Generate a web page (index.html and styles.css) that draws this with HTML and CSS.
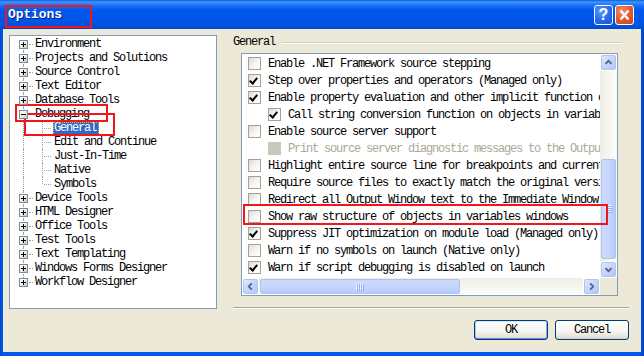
FILE: index.html
```html
<!DOCTYPE html>
<html>
<head>
<meta charset="utf-8">
<link rel="stylesheet" href="styles.css">
</head>
<body>
<div class="window">
  <div class="titlebar">
    <span class="title">Options</span>
    <div class="caption-btns">
      <span class="cbtn help">?</span>
      <span class="cbtn close"><svg width="19" height="20" viewBox="0 0 19 20"><path d="M5.5 5.5 L13.5 14.5 M13.5 5.5 L5.5 14.5" stroke="#fff" stroke-width="2.2" fill="none"/></svg></span>
    </div>
  </div>
  <div class="client">
    <div class="main">
      <div class="tree">
        <ul class="tree-list">
          <li class="node root first"><span class="twig"><i class="pm plus"></i></span><span class="lbl">Environment</span></li>
          <li class="node root"><span class="twig"><i class="pm plus"></i></span><span class="lbl">Projects and Solutions</span></li>
          <li class="node root"><span class="twig"><i class="pm plus"></i></span><span class="lbl">Source Control</span></li>
          <li class="node root"><span class="twig"><i class="pm plus"></i></span><span class="lbl">Text Editor</span></li>
          <li class="node root"><span class="twig"><i class="pm plus"></i></span><span class="lbl">Database Tools</span></li>
          <li class="node root"><span class="twig"><i class="pm minus"></i></span><span class="lbl">Debugging</span></li>
          <li class="node child"><span class="twig pass"></span><span class="twig"></span><span class="lbl sel">General</span></li>
          <li class="node child"><span class="twig pass"></span><span class="twig"></span><span class="lbl">Edit and Continue</span></li>
          <li class="node child"><span class="twig pass"></span><span class="twig"></span><span class="lbl">Just-In-Time</span></li>
          <li class="node child"><span class="twig pass"></span><span class="twig"></span><span class="lbl">Native</span></li>
          <li class="node child lastchild"><span class="twig pass"></span><span class="twig"></span><span class="lbl">Symbols</span></li>
          <li class="node root"><span class="twig"><i class="pm plus"></i></span><span class="lbl">Device Tools</span></li>
          <li class="node root"><span class="twig"><i class="pm plus"></i></span><span class="lbl">HTML Designer</span></li>
          <li class="node root"><span class="twig"><i class="pm plus"></i></span><span class="lbl">Office Tools</span></li>
          <li class="node root"><span class="twig"><i class="pm plus"></i></span><span class="lbl">Test Tools</span></li>
          <li class="node root"><span class="twig"><i class="pm plus"></i></span><span class="lbl">Text Templating</span></li>
          <li class="node root"><span class="twig"><i class="pm plus"></i></span><span class="lbl">Windows Forms Designer</span></li>
          <li class="node root last"><span class="twig"><i class="pm plus"></i></span><span class="lbl">Workflow Designer</span></li>
        </ul>
      </div>
      <div class="page">
        <div class="group-head"><span class="group-title">General</span><span class="rule"></span></div>
        <div class="listbox">
          <div class="list-area">
            <ul class="list">
              <li class="opt"><span class="cb"></span><span class="otext">Enable .NET Framework source stepping</span></li>
              <li class="opt"><span class="cb on"></span><span class="otext">Step over properties and operators (Managed only)</span></li>
              <li class="opt"><span class="cb on"></span><span class="otext">Enable property evaluation and other implicit function calls</span></li>
              <li class="opt sub"><span class="cb on"></span><span class="otext">Call string conversion function on objects in variables windows</span></li>
              <li class="opt"><span class="cb"></span><span class="otext">Enable source server support</span></li>
              <li class="opt sub off"><span class="cb"></span><span class="otext">Print source server diagnostic messages to the Output window</span></li>
              <li class="opt"><span class="cb"></span><span class="otext">Highlight entire source line for breakpoints and current statement</span></li>
              <li class="opt"><span class="cb"></span><span class="otext">Require source files to exactly match the original version</span></li>
              <li class="opt"><span class="cb"></span><span class="otext">Redirect all Output Window text to the Immediate Window</span></li>
              <li class="opt"><span class="cb"></span><span class="otext">Show raw structure of objects in variables windows</span></li>
              <li class="opt"><span class="cb on"></span><span class="otext">Suppress JIT optimization on module load (Managed only)</span></li>
              <li class="opt"><span class="cb"></span><span class="otext">Warn if no symbols on launch (Native only)</span></li>
              <li class="opt"><span class="cb on"></span><span class="otext">Warn if script debugging is disabled on launch</span></li>
            </ul>
            <div class="vscroll">
              <span class="sbtn"><svg width="15" height="15" viewBox="0 0 15 15"><path d="M4 9 L7.5 5.5 L11 9" stroke="#4D6185" stroke-width="2" fill="none"/></svg></span>
              <div class="vtrack">
                <span class="vthumb"><svg width="8" height="8" viewBox="0 0 8 8"><path d="M0 0.5H7M0 2.5H7M0 4.5H7M0 6.5H7" stroke="#EEF4FE"/><path d="M1 1.5H8M1 3.5H8M1 5.5H8M1 7.5H8" stroke="#8CB0F8"/></svg></span>
              </div>
              <span class="sbtn"><svg width="15" height="15" viewBox="0 0 15 15"><path d="M4 6 L7.5 9.5 L11 6" stroke="#4D6185" stroke-width="2" fill="none"/></svg></span>
            </div>
          </div>
          <div class="hscroll">
            <span class="sbtn"><svg width="15" height="15" viewBox="0 0 15 15"><path d="M9 4 L5.5 7.5 L9 11" stroke="#4D6185" stroke-width="2" fill="none"/></svg></span>
            <div class="htrack">
              <span class="hthumb"><svg width="8" height="8" viewBox="0 0 8 8"><path d="M0.5 0V7M2.5 0V7M4.5 0V7M6.5 0V7" stroke="#EEF4FE"/><path d="M1.5 1V8M3.5 1V8M5.5 1V8M7.5 1V8" stroke="#8CB0F8"/></svg></span>
            </div>
            <span class="sbtn"><svg width="15" height="15" viewBox="0 0 15 15"><path d="M6 4 L9.5 7.5 L6 11" stroke="#4D6185" stroke-width="2" fill="none"/></svg></span>
            <span class="corner"></span>
          </div>
        </div>
        <div class="sep"></div>
      </div>
    </div>
    <div class="buttons">
      <button class="btn default">OK</button>
      <button class="btn">Cancel</button>
    </div>
  </div>
  <span class="mark mark-title"></span>
  <span class="mark mark-debug"></span>
  <span class="mark mark-general"></span>
  <span class="mark mark-show"></span>
</div>
</body>
</html>
```

FILE: styles.css
```css
* { box-sizing: border-box; }
html, body { margin: 0; padding: 0; background: #fff; }
body { font-family: "Liberation Mono", "DejaVu Sans Mono", monospace; font-size: 12px; letter-spacing: -1.2px; color: #000; }

.window {
  position: relative;
  width: 644px;
  height: 356px;
  display: flex;
  flex-direction: column;
  background: linear-gradient(to right, #0047D6 0, #0058EE 3px, #0058EE 640px, #0040C0 644px);
  overflow: hidden;
}

.titlebar {
  height: 29px;
  flex: none;
  display: flex;
  align-items: center;
  justify-content: space-between;
  padding: 0 10px 0 8px;
  background: linear-gradient(#0A5FE0 0, #3D95FF 2px, #1E74F6 5px, #0058EE 10px, #0055E5 22px, #0050DC 27px, #0046C8 29px);
}
.title {
  color: #fff;
  font-weight: bold;
  font-size: 13px;
  letter-spacing: -0.1px;
  text-shadow: 1px 1px 0 #0A1883;
}
.caption-btns { display: flex; gap: 2px; }
.cbtn {
  width: 19px;
  height: 20px;
  border: 1px solid #fff;
  border-radius: 3px;
  display: flex;
  align-items: center;
  justify-content: center;
  color: #fff;
}
.cbtn svg { margin: -1px; }
.help {
  background: radial-gradient(circle at 35% 30%, #5A9BFF 0, #2767F0 55%, #1A55D8 100%);
  font-family: "Liberation Sans", Arial, sans-serif;
  font-weight: bold;
  font-size: 16px;
  letter-spacing: 0;
}
.close {
  background: radial-gradient(circle at 35% 30%, #F09070 0, #E0582C 55%, #C8401A 100%);
}

.client {
  flex: 1;
  margin: 0 3px 4px 3px;
  background: #ECE9D8;
  display: flex;
  flex-direction: column;
}
.main {
  display: flex;
  padding: 6px 0 0 6px;
}

/* tree */
.tree {
  width: 208px;
  height: 274px;
  border: 1px solid #7F9DB9;
  background: #fff;
  flex: none;
}
.tree-list {
  list-style: none;
  margin: 0;
  padding: 1px 0 0 4px;
}
.node {
  height: 14px;
  display: flex;
  align-items: center;
}
.twig {
  position: relative;
  width: 18px;
  height: 14px;
  flex: none;
}
.child .twig.pass { width: 19px; }
.twig::before {
  content: "";
  position: absolute;
  left: 9px;
  top: 0;
  bottom: 0;
  border-left: 1px dotted #A0A0A0;
}
.twig::after {
  content: "";
  position: absolute;
  left: 11px;
  width: 7px;
  top: 7px;
  border-top: 1px dotted #A0A0A0;
}
.root .twig::after { left: 15px; width: 4px; }
.twig.pass::after { display: none; }
.root.first .twig::before { top: 7px; }
.root.last .twig::before { bottom: 7px; }
.lastchild .twig:not(.pass)::before { bottom: 7px; }
.pm {
  position: absolute;
  left: 5px;
  top: 3px;
  width: 9px;
  height: 9px;
  border: 1px solid #7A8B9C;
  background: linear-gradient(135deg, #fff 0, #F3F1EA 45%, #C8C3B2 100%);
  z-index: 1;
}
.pm::before {
  content: "";
  position: absolute;
  left: 1px;
  top: 3px;
  width: 5px;
  height: 1px;
  background: #000;
}
.plus::after {
  content: "";
  position: absolute;
  left: 3px;
  top: 1px;
  width: 1px;
  height: 5px;
  background: #000;
}
.lbl {
  margin-left: 2px;
  padding: 0 3px 0 1px;
  height: 13px;
  line-height: 13px;
  white-space: nowrap;
}
.lbl.sel {
  background: #316AC5;
  color: #fff;
  outline: 1px dotted #E8B838;
  outline-offset: -1px;
}

/* page */
.page {
  margin-left: 16px;
  width: 396px;
  display: flex;
  flex-direction: column;
}
.group-head {
  margin-top: 1px;
  height: 12px;
  display: flex;
  align-items: center;
}
.group-title { line-height: 12px; }
.rule {
  flex: 1;
  height: 2px;
  margin: 1px 7px 0 7px;
  border-top: 1px solid #D0D0BF;
  border-bottom: 1px solid #fff;
}
.listbox {
  margin: 5px 0 0 8px;
  width: 377px;
  height: 243px;
  border: 1px solid #7F9DB9;
  background: #fff;
  display: flex;
  flex-direction: column;
}
.list-area {
  display: flex;
  height: 224px;
}
.list {
  list-style: none;
  margin: 0;
  padding: 1px 0 0 0;
  flex: 1;
  overflow: hidden;
}
.opt {
  height: 17px;
  display: flex;
  align-items: center;
  padding-left: 6px;
  white-space: nowrap;
}
.opt.sub { padding-left: 26px; }
.cb {
  width: 13px;
  height: 13px;
  flex: none;
  margin-right: 7px;
  border: 1px solid #A3A29A;
  background: linear-gradient(135deg, #DCDCD6 0, #F4F4F0 50%, #fff 100%);
  position: relative;
}
.cb.on::after {
  content: "";
  position: absolute;
  left: 2px;
  top: 1px;
  width: 3px;
  height: 6px;
  border-right: 2px solid #000;
  border-bottom: 2px solid #000;
  transform: rotate(40deg);
  transform-origin: center;
}
.off .cb { background: #CAC8BB; border-color: #CAC8BB; }
.off .otext { color: #ACA899; }

/* scrollbars */
.vscroll {
  width: 17px;
  flex: none;
  display: flex;
  flex-direction: column;
  background: linear-gradient(to right, #EEEDE5, #FEFEFB);
}
.sbtn {
  width: 17px;
  height: 17px;
  flex: none;
  border: 1px solid #fff;
  display: flex;
  align-items: center;
  justify-content: center;
}
.sbtn svg {
  border: 1px solid #B0C4EE;
  border-radius: 2px;
  background: linear-gradient(135deg, #E2EBFE 0, #C6D6FC 45%, #B4C8F6 100%);
}
.vtrack { flex: 1; }
.vthumb {
  display: flex;
  align-items: center;
  justify-content: center;
  margin: 88px 0 0 1px;
  width: 15px;
  height: 100px;
  border: 1px solid #ADC2EE;
  border-radius: 2px;
  background: linear-gradient(to right, #CCDBFD 0, #C3D4FC 60%, #B6CAF7 100%);
}
.hscroll {
  height: 17px;
  flex: none;
  display: flex;
  background: linear-gradient(#EEEDE5, #FEFEFB);
}
.htrack { flex: 1; }
.hthumb {
  display: flex;
  align-items: center;
  justify-content: center;
  margin: 1px 0 0 1px;
  width: 200px;
  height: 15px;
  border: 1px solid #ADC2EE;
  border-radius: 2px;
  background: linear-gradient(#CCDBFD 0, #C3D4FC 60%, #B6CAF7 100%);
}
.corner { width: 17px; height: 17px; background: #ECE9D8; flex: none; }

.sep {
  margin: 11px 0 0 0;
  height: 2px;
  border-top: 1px solid #ACA899;
  border-bottom: 1px solid #fff;
}

/* buttons */
.buttons {
  display: flex;
  justify-content: flex-end;
  gap: 7px;
  padding: 11px 12px 0 0;
}
.btn {
  width: 74px;
  height: 20px;
  margin: 0;
  padding: 0;
  font-family: "Liberation Mono", "DejaVu Sans Mono", monospace;
  font-size: 12px;
  letter-spacing: -1.2px;
  color: #000;
  border: 1px solid #003C74;
  border-radius: 3px;
  background: linear-gradient(#FFFFFF 0, #F5F4EF 60%, #E3E0D5 90%, #D6D0C5 100%);
}
.btn.default {
  box-shadow: inset 0 1px 0 #CEE7FF, inset 0 -1px 0 #6982EE, inset 1px 0 0 #A8C6F8, inset -1px 0 0 #8EA9F0;
}

/* red annotations */
.mark {
  position: absolute;
  border: 2px solid #F2151B;
}
.mark-title { left: 5px; top: 5px; width: 87px; height: 23px; }
.mark-debug { left: 15px; top: 104px; width: 93px; height: 18px; }
.mark-general { left: 24px; top: 113px; width: 91px; height: 23px; }
.mark-show { left: 243px; top: 204px; width: 365px; height: 21px; }
```
